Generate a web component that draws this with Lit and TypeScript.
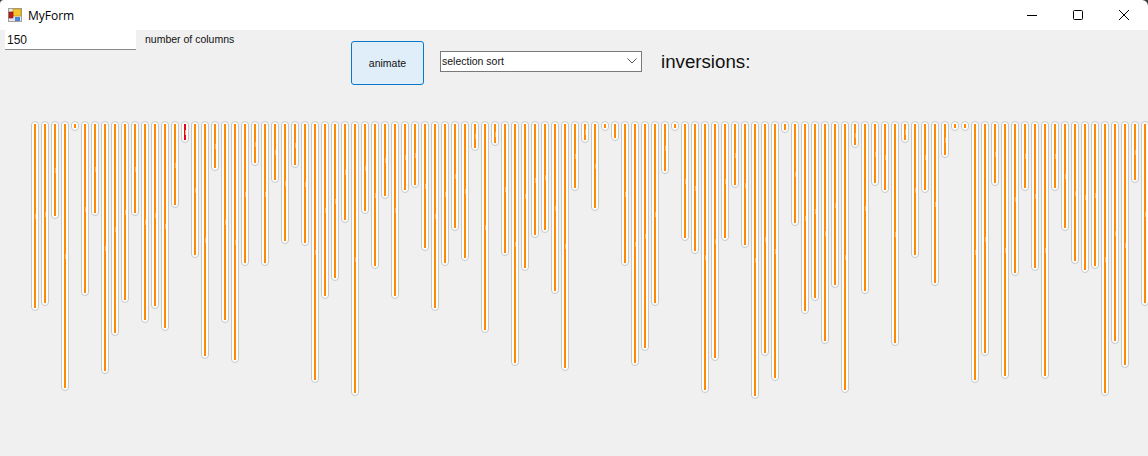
import { LitElement, html, css } from 'lit';
import { customElement } from 'lit/decorators.js';

// bottom edge (page y) of each column, left to right
const BOTTOMS = [
  310, 305, 218, 390, 130, 295, 215, 373, 335, 302, 215, 322, 308, 330, 207, 142, 257, 358, 170, 322, 362, 265, 165, 265, 182, 243,
  167, 245, 382, 298, 280, 222, 395, 213, 268, 198, 298, 192, 187, 250, 310, 265, 230, 260, 150, 332, 145, 255, 365, 270, 237, 232, 293, 370, 190,
  142, 210, 130, 140, 265, 365, 350, 305, 173, 130, 240, 253, 392, 360, 240, 187, 247, 398, 355, 380, 132, 225, 313, 300, 343, 287, 392, 147,
  293, 185, 192, 345, 142, 257, 192, 285, 157, 130, 130, 382, 355, 185, 378, 275, 190, 270, 378, 190, 230, 263, 272, 268, 395, 343, 367, 182, 305,
];
const TOP = 121;
const ACTIVE = 15;

@customElement('app-root')
export default class App extends LitElement {
  static override styles = css`
    :host {
      display: block;
      width: 1148px;
      height: 456px;
      overflow: hidden;
      background: #3a3a3a;
      font-family: 'Liberation Sans', Arial, sans-serif;
      color: #111;
    }
    .app__titlebar {
      display: flex;
      align-items: center;
      height: 30px;
      padding: 0 1px 0 8px;
      box-sizing: border-box;
      background: #fff;
      border-radius: 4px 6px 0 0;
    }
    .app__title {
      margin-left: 6px;
      font-family: 'Open Sans', sans-serif;
      font-size: 12px;
      color: #000;
    }
    .app__winbtns {
      display: flex;
      margin-left: auto;
    }
    .app__winbtn {
      display: flex;
      justify-content: center;
      align-items: center;
      width: 46px;
      height: 30px;
    }
    .app__body {
      height: 426px;
      background: #f0f0f0;
    }
    .app__toolbar {
      display: flex;
      align-items: flex-start;
      height: 91px;
    }
    .app__input {
      width: 131px;
      height: 20px;
      margin-left: 5px;
      padding: 3px 0 0 2px;
      box-sizing: border-box;
      background: #fff;
      border-bottom: 1px solid #8a8a8a;
      font-size: 12px;
    }
    .app__label {
      margin: 3px 0 0 9px;
      width: 206px;
      font-size: 10.5px;
    }
    .app__button {
      display: flex;
      justify-content: center;
      align-items: center;
      width: 73px;
      height: 44px;
      margin-top: 11px;
      box-sizing: border-box;
      background: #e0eef9;
      border: 1px solid #0a78c8;
      border-radius: 3px;
      font-size: 10.5px;
    }
    .app__select {
      display: flex;
      align-items: center;
      justify-content: space-between;
      width: 202px;
      height: 21px;
      margin: 21px 0 0 16px;
      padding: 0 4px 1px 1px;
      box-sizing: border-box;
      background: #fff;
      border: 1px solid #7a7a7a;
      font-size: 10.5px;
    }
    .app__inversions {
      margin: 21px 0 0 19px;
      font-size: 18.7px;
      line-height: 22px;
    }
    .chart {
      display: flex;
      align-items: flex-start;
      gap: 2px;
      padding-left: 31px;
    }
    .chart__bar {
      flex: none;
      width: 8px;
      padding: 2px;
      box-sizing: border-box;
      background: #fff;
      border: 1px solid #c8c8c8;
      border-radius: 4px;
    }
    .chart__fill {
      position: relative;
      height: 100%;
      background: #ff8800;
    }
    .chart__fill--active {
      background: #ee0018;
    }
    .chart__fill::after {
      content: '';
      position: absolute;
      top: 50%;
      right: 0;
      width: 1px;
      height: 5px;
      margin-top: -2px;
      background: #ffb45c;
    }
    .chart__bar--short .chart__fill::after {
      display: none;
    }
  `;

  override render() {
    return html`
      <div class="app__titlebar">
        <svg width="14" height="14" viewBox="0 0 14 14">
          <rect x="0.5" y="0.5" width="13" height="13" fill="#e8e8e8" stroke="#a0a0a0"></rect>
          <rect x="5" y="1" width="8" height="7" fill="#f5c430" stroke="#b98a10" stroke-width="0.6"></rect>
          <rect x="1" y="4" width="4" height="6" fill="#c0201c" stroke="#801010" stroke-width="0.6"></rect>
          <rect x="7" y="9" width="5" height="4" fill="#4a86dc"></rect>
        </svg>
        <span class="app__title">MyForm</span>
        <div class="app__winbtns">
          <div class="app__winbtn">
            <svg width="10" height="10" viewBox="0 0 10 10"><path d="M0 5.5H10" stroke="#000" fill="none"></path></svg>
          </div>
          <div class="app__winbtn">
            <svg width="10" height="10" viewBox="0 0 10 10"><rect x="0.5" y="0.5" width="9" height="9" rx="1" stroke="#000" fill="none"></rect></svg>
          </div>
          <div class="app__winbtn">
            <svg width="10" height="10" viewBox="0 0 10 10"><path d="M0 0L10 10M10 0L0 10" stroke="#000" fill="none"></path></svg>
          </div>
        </div>
      </div>
      <div class="app__body">
        <div class="app__toolbar">
          <div class="app__input">150</div>
          <div class="app__label">number of columns</div>
          <div class="app__button">animate</div>
          <div class="app__select">
            <span>selection sort</span>
            <svg width="10" height="6" viewBox="0 0 10 6"><path d="M0.5 0.5L5 5L9.5 0.5" stroke="#555" fill="none"></path></svg>
          </div>
          <div class="app__inversions">inversions:</div>
        </div>
        <div class="chart">
          ${BOTTOMS.map((b, i) => html`
            <div class="chart__bar ${b - TOP < 20 ? 'chart__bar--short' : ''}" style="height:${b + 1 - TOP}px">
              <div class="chart__fill ${i === ACTIVE ? 'chart__fill--active' : ''}"></div>
            </div>
          `)}
        </div>
      </div>
    `;
  }
}
